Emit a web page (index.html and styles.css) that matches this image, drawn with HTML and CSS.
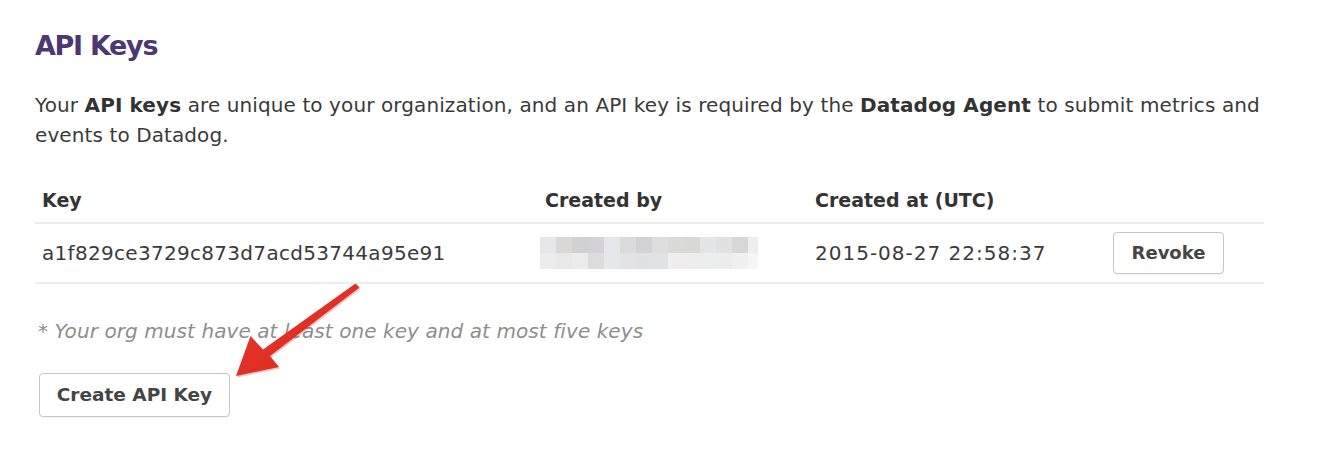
FILE: index.html
```html
<!DOCTYPE html>
<html lang="en">
<head>
<meta charset="utf-8">
<title>API Keys</title>
<link rel="stylesheet" href="styles.css">
</head>
<body>
<div class="page">
  <h1 class="title">API Keys</h1>
  <p class="desc">Your <strong>API keys</strong> are unique to your organization, and an API key is required by the <strong>Datadog Agent</strong> to submit metrics and events to Datadog.</p>
  <table class="keys">
    <colgroup>
      <col class="c-key">
      <col class="c-by">
      <col class="c-at">
      <col class="c-act">
    </colgroup>
    <thead>
      <tr><th>Key</th><th>Created by</th><th>Created at (UTC)</th><th></th></tr>
    </thead>
    <tbody>
      <tr>
        <td class="key">a1f829ce3729c873d7acd53744a95e91</td>
        <td>
          <div class="blur">
            <span class="p a1"></span><span class="p a2"></span><span class="p a3"></span><span class="p a4"></span><span class="p a5"></span><span class="p a6"></span><span class="p a7"></span><span class="p a8"></span><span class="p a9"></span><span class="p a10"></span><span class="p a11"></span><span class="p a12"></span><span class="p a13"></span><span class="p a14"></span>
            <span class="p b1"></span><span class="p b2"></span><span class="p b3"></span><span class="p b4"></span><span class="p b5"></span><span class="p b6"></span><span class="p b7"></span><span class="p b8"></span><span class="p b9"></span><span class="p b10"></span><span class="p b11"></span><span class="p b12"></span><span class="p b13"></span><span class="p b14"></span>
          </div>
        </td>
        <td class="date">2015-08-27 22:58:37</td>
        <td><button class="btn revoke" type="button">Revoke</button></td>
      </tr>
    </tbody>
  </table>
  <p class="note">* Your org must have at least one key and at most five keys</p>
  <button class="btn create" type="button">Create API Key</button>

  <svg class="arrow" width="1324" height="472" viewBox="0 0 1324 472" aria-hidden="true">
    <defs>
      <linearGradient id="ag" x1="0" y1="0" x2="1" y2="1">
        <stop offset="0" stop-color="#e8392c"/>
        <stop offset="1" stop-color="#d9261d"/>
      </linearGradient>
    </defs>
    <polygon points="355.5,283.5 359.5,287.5 270,356 279,367 236,376 250.5,336 263,349.5" fill="#b81a12" opacity="0.25" transform="translate(1,1.5)"/>
    <polygon points="355.5,283.5 359.5,287.5 270,356 279,367 236,376 250.5,336 263,349.5" fill="url(#ag)"/>
  </svg>
</div>
</body>
</html>
```

FILE: styles.css
```css
html, body {
  margin: 0;
  padding: 0;
  background: #ffffff;
}

body {
  font-family: "DejaVu Sans", "Liberation Sans", sans-serif;
  color: #3a3a3a;
}

.page {
  position: relative;
  width: 1229px;
  padding: 30px 0 0 35px;
  height: 442px;
}

.title {
  margin: 0;
  font-size: 27px;
  line-height: 32px;
  font-weight: bold;
  letter-spacing: -1.3px;
  color: #4c3873;
}

.desc {
  margin: 28px 0 28px 0;
  font-size: 20px;
  line-height: 30px;
  letter-spacing: 0.1px;
  color: #3a3a3a;
}

.desc strong {
  font-weight: bold;
  color: #333;
}

.keys {
  width: 1229px;
  border-collapse: collapse;
  table-layout: fixed;
}

.c-key { width: 503px; }
.c-by { width: 270px; }
.c-at { width: 298px; }
.c-act { width: 158px; }

.keys th {
  text-align: left;
  font-size: 19px;
  line-height: 24px;
  font-weight: bold;
  color: #333;
  padding: 10px 0 10px 7px;
  border-bottom: 2px solid #ebebeb;
}

.keys td {
  font-size: 20px;
  line-height: 24px;
  padding: 8px 0 8px 7px;
  vertical-align: middle;
  border-bottom: 2px solid #ededed;
  color: #3a3a3a;
  white-space: nowrap;
}

.keys td.key {
  letter-spacing: 0.3px;
}

.keys td.date {
  letter-spacing: 1px;
}

.blur {
  margin-left: -5px;
  width: 218px;
  height: 32px;
  display: grid;
  grid-template-columns: repeat(13, 16px) 10px;
  grid-template-rows: 16px 16px;
}

.p { display: block; }
.a1 { background: #e6e6e9; }
.a2 { background: #d9d8d6; }
.a3 { background: #d1d1d4; }
.a4 { background: #d4d2d3; }
.a5 { background: #e5e6e9; }
.a6 { background: #dbdbdb; }
.a7 { background: #d2d2d5; }
.a8 { background: #dddddd; }
.a9 { background: #dadad9; }
.a10 { background: #d8d8d6; }
.a11 { background: #e4e5e7; }
.a12 { background: #e1e1e1; }
.a13 { background: #d7d7d7; }
.a14 { background: #eeeef0; }
.b1 { background: #ececec; }
.b2 { background: #e8e8e8; }
.b3 { background: #ebebeb; }
.b4 { background: #dddbdc; }
.b5 { background: #e6e7e9; }
.b6 { background: #e3e3e5; }
.b7 { background: #e0e1e3; }
.b8 { background: #e1e2e4; }
.b9 { background: #efeded; }
.b10 { background: #ededed; }
.b11 { background: #eceeee; }
.b12 { background: #ececec; }
.b13 { background: #f0f0f0; }
.b14 { background: #f6f6f6; }

.btn {
  font-family: "DejaVu Sans", "Liberation Sans", sans-serif;
  font-weight: bold;
  color: #454545;
  background: #ffffff;
  border: 1px solid #c6c6c6;
  border-radius: 4px;
  box-shadow: 0 1px 0 rgba(0, 0, 0, 0.04);
  cursor: pointer;
}

.revoke {
  width: 111px;
  height: 42px;
  font-size: 18px;
  line-height: 20px;
  padding: 0;
}

.note {
  margin: 35px 0 30px 3px;
  font-size: 20px;
  line-height: 24px;
  letter-spacing: 0.08px;
  font-style: italic;
  color: #8e8e8e;
}

.create {
  display: block;
  margin-left: 4px;
  width: 191px;
  height: 44px;
  font-size: 18.5px;
  line-height: 22px;
  padding: 0;
}

.arrow {
  position: absolute;
  left: 0;
  top: 0;
  pointer-events: none;
}
```
